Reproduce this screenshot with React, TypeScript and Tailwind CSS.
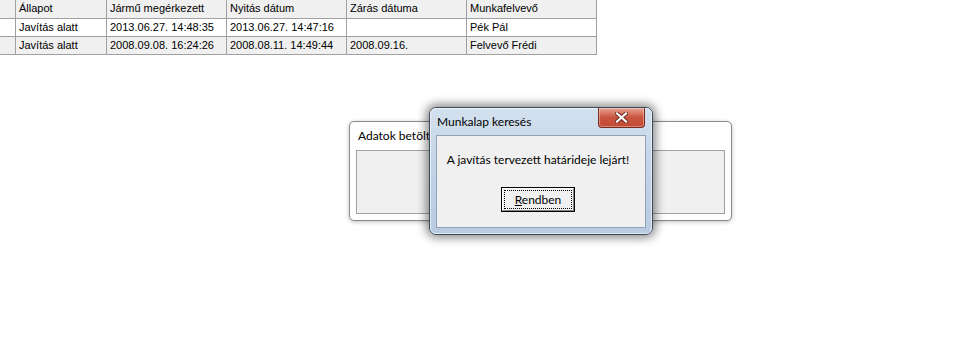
import React from "react";

const rows = [
  ["", "Állapot", "Jármű megérkezett", "Nyitás dátum", "Zárás dátuma", "Munkafelvevő"],
  ["", "Javítás alatt", "2013.06.27. 14:48:35", "2013.06.27. 14:47:16", "", "Pék Pál"],
  ["", "Javítás alatt", "2008.09.08. 16:24:26", "2008.08.11. 14:49:44", "2008.09.16.", "Felvevő Frédi"],
];

const widths = ["w-[16px]", "w-[91px]", "w-[120px]", "w-[120px]", "w-[120px]", "w-[130px]"];

function Grid() {
  return (
    <div className="w-[597px] border-b border-[#a0a0a0] font-['Liberation_Sans',Arial,sans-serif] text-[11px] text-black">
      {rows.map((row, i) => (
        <div
          key={i}
          className={
            "flex h-[18px] border-t border-[#a0a0a0] first:border-t-0 " +
            (i === 1 ? "bg-white" : "bg-[#f0f0f0]")
          }
        >
          {row.map((cell, j) => (
            <div
              key={j}
              className={widths[j] + " h-full border-r border-[#a0a0a0] pl-[3px] leading-[17px] whitespace-nowrap overflow-hidden"}
            >
              {cell}
            </div>
          ))}
        </div>
      ))}
    </div>
  );
}

function BackWindow() {
  return (
    <div className="absolute left-[349px] top-[121px] w-[383px] h-[100px] rounded-[5px] border border-[#8a8a8a] bg-white shadow-[0_1px_4px_rgba(0,0,0,0.25)] flex flex-col px-[6px] pb-[6px] font-['Lato',sans-serif]">
      <div className="h-[28px] pl-[2px] flex items-center text-[12px] text-black">
        Adatok betöltése
      </div>
      <div className="flex-1 border border-[#a0a0a0] bg-[#f0f0f0]" />
    </div>
  );
}

function CloseButton() {
  return (
    <div className="absolute right-[7px] top-0 w-[47px] h-[20px] rounded-b-[4px] border border-t-0 border-[#7a2a1e] bg-gradient-to-b from-[#e8a294] via-[#c9553f] to-[#c24a32] flex items-center justify-center shadow-[inset_0_0_0_1px_rgba(255,255,255,0.35)]">
      <svg width="13" height="11" viewBox="0 0 13 11">
        <path d="M2 1.5 L11 9.5 M11 1.5 L2 9.5" stroke="#6a2a20" strokeWidth="4" strokeLinecap="square" />
        <path d="M2 1.5 L11 9.5 M11 1.5 L2 9.5" stroke="#ffffff" strokeWidth="2.2" strokeLinecap="square" />
      </svg>
    </div>
  );
}

function MessageBox() {
  return (
    <div className="absolute left-[429px] top-[107px] w-[224px] h-[128px] rounded-[7px] border border-[#3a4a5c] bg-gradient-to-b from-[#d3e0ee] via-[#c2d3e6] to-[#b8cbe0] shadow-[0_0_10px_3px_rgba(0,0,0,0.45)] flex flex-col px-[6px] pb-[6px] font-['Lato',sans-serif]">
      <div className="absolute inset-0 rounded-[6px] border border-white/60 pointer-events-none" />
      <CloseButton />
      <div className="h-[27px] pl-[1px] flex items-center text-[12px] text-black">Munkalap keresés</div>
      <div className="flex-1 border border-[#8ea2b8] bg-[#f0f0f0] flex flex-col items-center pt-[16px]">
        <div className="text-[12px] text-black leading-[16px] pr-[6px]">A javítás tervezett határideje lejárt!</div>
        <button className="mt-[19px] ml-[-6px] w-[74px] h-[25px] border border-black bg-[#f0f0f0] p-0 flex">
          <div className="flex-1 border border-t-white border-l-white border-r-[#808080] border-b-[#808080] p-[1px] flex">
            <div className="flex-1 border border-dotted border-black flex items-center justify-center text-[12px] text-black">
              <span>
                <span className="underline">R</span>endben
              </span>
            </div>
          </div>
        </button>
      </div>
    </div>
  );
}

export default function App() {
  return (
    <div className="relative w-[966px] h-[353px] bg-white overflow-hidden">
      <Grid />
      <BackWindow />
      <MessageBox />
    </div>
  );
}
